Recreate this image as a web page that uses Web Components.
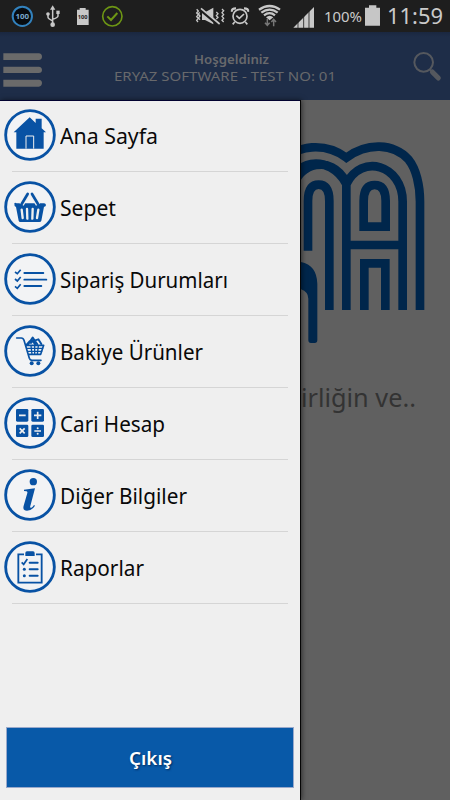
<!DOCTYPE html>
<html lang="tr"><head><meta charset="utf-8"><title>Eryaz</title>
<style>html,body{margin:0;height:100%;overflow:hidden;background:#606060}body{font-family:"Noto Sans","Open Sans",sans-serif}</style></head>
<body><app-screen></app-screen>
<script>
const define=(name,html,after)=>customElements.define(name,class extends HTMLElement{
  connectedCallback(){
    if(this.shadowRoot)return;
    const t=document.createElement('template');
    t.innerHTML=typeof html==='function'?html(this):html;
    this.attachShadow({mode:'open'}).append(t.content.cloneNode(true));
    if(after)after(this);
  }
});

/* Text condensed or widened to the width given in the "w" attribute. */
define('fit-text',e=>`<style>:host{display:block;width:${e.getAttribute('w')}px;white-space:nowrap}span{display:inline-block;transform-origin:0 50%}</style><span>${e.getAttribute('text')}</span>`,e=>{
  const s=e.shadowRoot.querySelector('span');
  s.style.transform=`scaleX(${+e.getAttribute('w')/s.getBoundingClientRect().width})`;
});

/* Each glyph: left edge, width (in thirds of a pixel), drawing. */
const glyphs={
  badge:[34,68,`<circle cx="68" cy="49" r="29" fill="#080c10" stroke="#3282be" stroke-width="6"/><text x="68" y="57" font-size="22" font-weight="700" fill="#78a8cc" text-anchor="middle" textLength="41" lengthAdjust="spacingAndGlyphs">100</text>`],
  usb:[134,46,`<g fill="none" stroke="#c8c8c8" stroke-width="4.5"><path d="M157 25V74M143 44V52Q143 56 157 63M173 38V48Q173 53 157 58"/></g><path d="M149 29L157 16L165 29Z" fill="#c8c8c8"/><circle cx="143" cy="42" r="5.5" fill="#c8c8c8"/><rect x="168" y="32" width="10" height="10" fill="#c8c8c8"/><circle cx="157" cy="74" r="7" fill="#c8c8c8"/>`],
  cell:[228,42,`<path d="M231 29H239V24H257V29H266V75H231Z" fill="#c8c8c8"/><text x="248" y="58" font-size="17" font-weight="700" fill="#222" text-anchor="middle" textLength="29" lengthAdjust="spacingAndGlyphs">100</text>`],
  check:[304,68,`<g fill="none" stroke="#6d9614"><circle cx="338" cy="49" r="29" stroke-width="5"/><path d="M323 49L334 60L353 39" stroke-width="6"/></g>`],
  mute:[14,92,`<path d="M35 37H44L69 23V73L44 60H35Z" fill="#c8c8c8"/><path d="M31 29L88 77" stroke="#1e1e1e" stroke-width="10"/><path d="M32 25L88 72" stroke="#c8c8c8" stroke-width="5"/><g fill="none" stroke="#c8c8c8" stroke-width="4"><path d="M19 28l5 5-5 6 5 5-5 6 5 5-5 6 4 5M28 37l-4 5 5 6-5 6 5 5M78 36l5 5-5 6 5 5-5 5M95 27l5 5-5 6 5 6-5 5 5 6-5 6 5 5"/></g>`],
  alarm:[120,60,`<g fill="none" stroke="#c8c8c8" stroke-width="5"><circle cx="150" cy="49" r="21"/><path d="M139 47L148 55L162 42M134 66L128 73M166 66L172 73"/><path d="M126 35Q124 25 138 25M174 35Q176 25 162 25" stroke-width="7"/></g>`],
  wifi:[204,72,`<g fill="none" stroke="#c8c8c8" stroke-width="7"><path d="M207 29Q239 7 270 29M214 38Q239 20 263 38M222 46Q239 33 255 46"/></g><path d="M228 52Q239 43 250 52L239 61Z" fill="#c8c8c8"/><g fill="none" stroke="#777" stroke-width="4.5"><path d="M232 56V76M225 68L232 76L239 68M251 79V58M244 66L251 58L258 66"/></g>`],
  signal:[309,68,`<path d="M310 83L372 21V83Z" fill="#c8c8c8"/><path d="M324 60V84M341 45V84M357 30V84" stroke="#1e1e1e" stroke-width="2.5"/>`],
  battery:[525,46,`<path d="M525 23H537V16H559V23H570V77H525Z" fill="#c6c6c6"/>`]
};
define('status-glyph',e=>{const[x,w,d]=glyphs[e.getAttribute('name')];
  return `<style>:host{display:block;flex:none}svg{display:block}</style><svg width="${w/3}" height="32" viewBox="${x} 0 ${w} 96">${d}</svg>`});

define('status-bar',`<style>:host{display:flex;height:32px;box-sizing:border-box;background:#1e1e1e;color:#cacaca;padding-left:11.33px}
.p{font-size:15px;line-height:33px}.t{font-size:21.5px;line-height:31px}</style>
<status-glyph name="badge"></status-glyph><status-glyph name="usb" style="margin-left:10.67px"></status-glyph><status-glyph name="cell" style="margin-left:16px"></status-glyph><status-glyph name="check" style="margin-left:11.33px"></status-glyph>
<status-glyph name="mute" style="margin-left:70.67px"></status-glyph><status-glyph name="alarm" style="margin-left:4.67px"></status-glyph><status-glyph name="wifi" style="margin-left:8px"></status-glyph><status-glyph name="signal" style="margin-left:11px"></status-glyph>
<fit-text class="p" w="38" text="100%" style="margin-left:8px"></fit-text><status-glyph name="battery" style="margin-left:3.3px"></status-glyph><fit-text class="t" w="56" text="11:59" style="margin-left:6.5px"></fit-text>`);

define('title-bar',`<style>:host{display:flex;height:68px;background:linear-gradient(#1a2740,#1e2d48 5px);color:#68696c}
svg{display:block;flex:none}.m{margin:20px 0 0 3px}.c{display:flex;flex-direction:column;margin:18px 0 0 71px;width:225px}.a{font-size:13px;font-weight:600;line-height:18px;margin-left:80px}.b{font-size:13px;line-height:17px}.s{margin:18px 0 0 73px}</style>
<svg class="m" width="40" height="36" viewBox="9 156 120 108"><path d="M10 160H116Q126 161 126 170T116 180H10ZM10 200H116Q126 201 126 210T116 219H10ZM10 239H116Q126 240 126 249T116 260H10Z" fill="#6a6a6a"/></svg>
<div class="c"><fit-text class="a" w="75" text="Hoşgeldiniz"></fit-text><fit-text class="b" w="222" text="ERYAZ SOFTWARE - TEST NO: 01"></fit-text></div>
<svg class="s" width="30" height="32" viewBox="663 150 90 96"><circle cx="698" cy="187" r="28" fill="none" stroke="#55585e" stroke-width="6"/><path d="M716 208L724 216" stroke="#55585e" stroke-width="6"/><path d="M724 216L742 234" stroke="#55585e" stroke-width="15" stroke-linecap="round"/></svg>`);

/* Each menu icon: vertical offset of its ring, drawing. */
const icons={
  home:[28,`<path d="M41 98L89 53L107 70V57H125V86L138 98H131V147H49V98Z" fill="#0852a4"/><path d="M78 147V109H101V147" fill="none" stroke="#efefef" stroke-width="3"/>`],
  basket:[34,`<path d="M43 101Q45 98 50 101H129Q137 99 138 106Q137 112 132 111L124 153Q123 157 118 157H61Q57 157 56 153L48 112Q42 110 43 101Z" fill="#0852a4"/><path d="M65 105L82 73M114 105L96 73" stroke="#efefef" stroke-width="14"/><path d="M65 103L83 73M114 103L96 73" stroke="#0852a4" stroke-width="8" stroke-linecap="round"/><path d="M65 120L68 145M81 118L82 147M98 118L97 147M115 120L111 145" stroke="#efefef" stroke-width="7" stroke-linecap="round"/>`],
  list:[23,`<g fill="none" stroke="#0852a4"><path d="M73 83H130M73 103H139M73 122H124" stroke-width="5.5" stroke-linecap="round"/><path d="M45 80L52 85L62 73M45 101L52 107L62 95M45 123L52 129L62 117" stroke-width="5"/></g>`],
  cart:[30,`<g fill="none" stroke="#0852a4" stroke-width="5" stroke-linecap="round" stroke-linejoin="round"><path d="M50 69H64Q70 69 72 76L88 130Q90 136 96 136H123M77 91H131L122 118H86"/><path d="M83 90L98 68L112 88M93 84L98 77L105 88M103 77L115 73L124 87M78 91L90 78" stroke-width="6"/><path d="M82 100H128M85 109H125M93 92L96 118M104 92V118M115 92L112 118" stroke-width="4"/></g><circle cx="95" cy="145" r="6" fill="#0852a4"/><circle cx="115" cy="145" r="6" fill="#0852a4"/>`],
  calc:[21,`<g fill="#0852a4"><rect x="48" y="57" width="37" height="38" rx="4"/><rect x="94" y="57" width="38" height="38" rx="4"/><rect x="48" y="104" width="37" height="37" rx="4"/><rect x="94" y="104" width="38" height="37" rx="4"/></g><path d="M57 76H77M102 76H124M113 65V87M59 115L74 130M74 115L59 130M103 123H123" stroke="#efefef" stroke-width="5"/><circle cx="113" cy="115" r="3" fill="#efefef"/><circle cx="113" cy="131" r="3" fill="#efefef"/>`],
  info:[26,`<circle cx="100" cy="64" r="11" fill="#0852a4"/><path d="M72 88Q88 87 105 84L91 137Q89 144 94 142Q98 140 102 134L105 136Q96 151 81 151Q67 151 71 136L82 98Q84 92 72 92Z" fill="#0852a4"/>`],
  report:[32,`<g fill="none" stroke="#0852a4"><path d="M72 72H55V157H125V72H108" stroke-width="5.5"/><path d="M89 97H113M89 117H113M89 136H113" stroke-width="6" stroke-linecap="round"/><path d="M65 96L71 102L82 86" stroke-width="5"/></g><path d="M76 77V68Q76 63 81 63H99Q104 63 104 68V77Z" fill="#0852a4"/><circle cx="73" cy="117" r="4.5" fill="#0852a4"/><circle cx="73" cy="136" r="4.5" fill="#0852a4"/>`]
};
define('menu-item',e=>{const[y,d]=icons[e.getAttribute('icon')];
  return `<style>:host{display:flex;flex-direction:column;height:72px;color:#090909;font-size:21.5px}.r{display:flex;align-items:center;height:71px;box-sizing:border-box;padding:0 0 1px 4px;gap:4px}svg{display:block;flex:none}fit-text{line-height:32px;padding-top:1px}hr{margin:0 12px;border:0;height:1px;background:#d5d5d5}</style>
<div class="r"><svg width="52" height="52" viewBox="12 ${y} 156 156"><circle cx="90" cy="${y+78}" r="73" fill="#f2f3f5" stroke="#0852a4" stroke-width="8.5"/>${d}</svg><fit-text w="${e.getAttribute('w')}" text="${e.getAttribute('label')}"></fit-text></div><hr>`});

define('side-menu',`<style>:host{display:flex;flex-direction:column;width:300px;height:700px;flex:none;background:linear-gradient(#020230 1px,#efefef 1px);border-right:1px solid #050505;position:relative;z-index:1;box-shadow:1px 0 5px #0008}
button{margin:auto 6px 12px;height:61px;box-sizing:border-box;padding:0 0 0 122px;background:#0859a8;border:1px solid #99a9cb;color:#fff;font:600 18.5px "Noto Sans",sans-serif;text-align:left;text-shadow:1px 1px 2px #002a5c}</style>
<menu-item icon="home" label="Ana Sayfa" w="98"></menu-item>
<menu-item icon="basket" label="Sepet" w="56"></menu-item>
<menu-item icon="list" label="Sipariş Durumları" w="168"></menu-item>
<menu-item icon="cart" label="Bakiye Ürünler" w="143"></menu-item>
<menu-item icon="calc" label="Cari Hesap" w="105"></menu-item>
<menu-item icon="info" label="Diğer Bilgiler" w="127"></menu-item>
<menu-item icon="report" label="Raporlar" w="84"></menu-item>
<button><fit-text w="43" text="Çıkış"></fit-text></button>`);

define('home-view',`<style>:host{display:block;flex:1;overflow:hidden;background:#606060;color:#333}svg{display:block;margin-top:30px}fit-text{font-size:26px;line-height:36px;margin-top:16px}</style>
<svg width="149" height="233" viewBox="33 105 447 699" fill="none" stroke="#00264b" stroke-width="26">
<path d="M-12 205C12 145 110 143 169 188C232 142 310 144 356 194C378 221 390 270 390 320V645"/>
<path d="M-12 320C-5 180 121 177 169 267C214 174 338 209 338 320V645M169 262V645M169 450H338M169 262C121 171 25 214 15 265"/>
<path d="M54 467V318Q54 269 86 269T118 318V645"/>
<path d="M221 395V318Q221 270 254 270T287 318V395Z"/>
<path d="M223 645V505H286V645"/>
<path d="M33 501Q80 510 82 566V735Q82 744 74 744H63Q55 744 55 735V611Q55 591 33 583Z" fill="#00264b" stroke="none"/>
</svg><fit-text w="115" text="irliğin ve.."></fit-text>`);

define('app-screen',`<style>:host{display:flex;flex-direction:column;width:450px;height:800px;overflow:hidden}main{display:flex;height:700px}</style>
<status-bar></status-bar><title-bar></title-bar><main><side-menu></side-menu><home-view></home-view></main>`);
</script></body></html>
